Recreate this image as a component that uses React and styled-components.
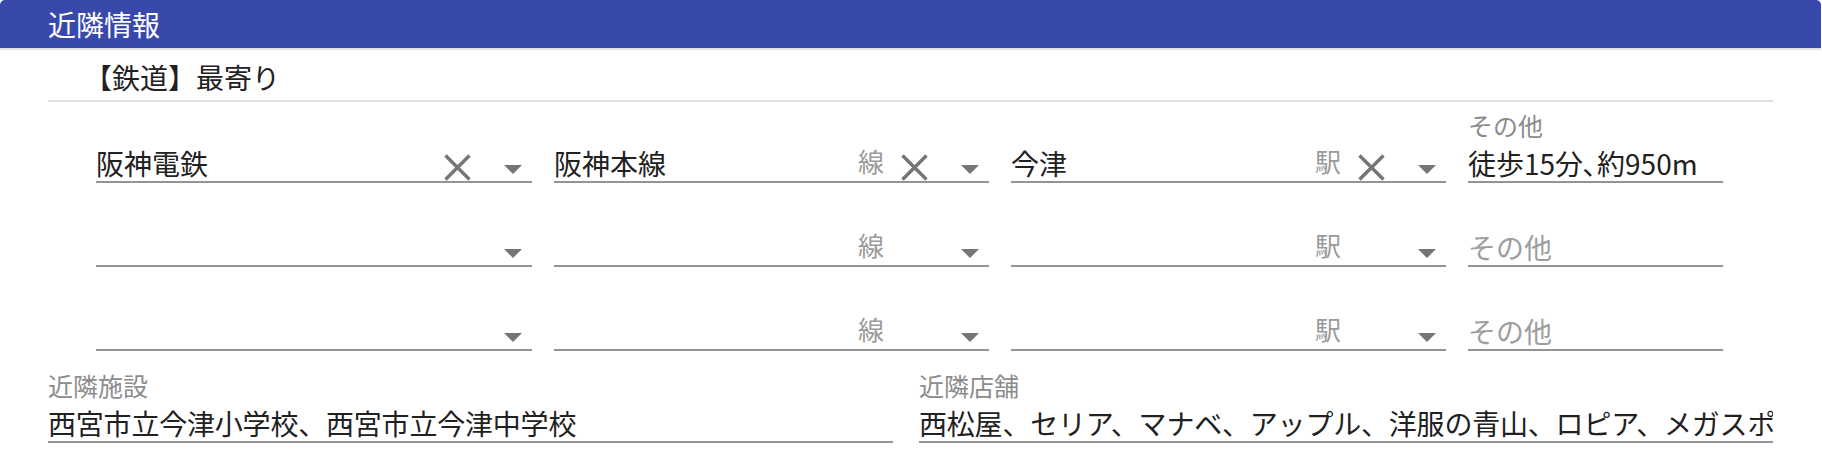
import React from 'react';
import styled, { createGlobalStyle } from 'styled-components';

const Global = createGlobalStyle`
  html, body { margin: 0; padding: 0; background: #fff; }
  body { font-family: "Noto Sans CJK JP", "Noto Sans", sans-serif; color: #212121; }
`;

const Page = styled.div`
  width: 1822px;
`;

const Header = styled.div`
  height: 48px;
  margin-right: 1px;
  background: #3949ab;
  color: #fff;
  border-radius: 5px 5px 0 0;
  padding-left: 48px;
  font-size: 28px;
  line-height: 48px;
  box-shadow: 0 2px 0 #e3e3e3;
`;

const Body = styled.div`
  padding: 0 49px 0 48px;
`;

const SubHeading = styled.div`
  height: 46px;
  padding-top: 6px;
  padding-left: 36px;
  display: flex;
  align-items: center;
  font-size: 28px;
  color: #212121;
  border-bottom: 2px solid #e0e0e0;
`;

const Rows = styled.div`
  display: grid;
  grid-template-columns: 436px 435px 435px 255px;
  column-gap: 22px;
  row-gap: 12px;
  padding: 9px 0 0 48px;
`;

const Field = styled.div`
  display: flex;
  flex-direction: column;
  min-width: 0;
`;

const Label = styled.div`
  height: 30px;
  font-size: 25px;
  line-height: 28px;
  color: #8c8c8c;
  white-space: nowrap;
`;

const InputRow = styled.div`
  height: 38px;
  padding-bottom: 2px;
  display: flex;
  align-items: flex-end;
  border-bottom: 2px solid #949494;
`;

const Input = styled.input`
  flex: 1;
  min-width: 0;
  height: 32px;
  padding: 0;
  border: none;
  outline: none;
  background: transparent;
  font-family: inherit;
  font-size: 28px;
  line-height: 32px;
  letter-spacing: ${(p) => (p.$tight ? '-0.2px' : 'normal')};
  color: #212121;
  &::placeholder {
    color: #9e9e9e;
    opacity: 1;
  }
`;

const Suffix = styled.span`
  font-size: 26px;
  line-height: 32px;
  color: #9a9a9a;
  margin-right: 17px;
  align-self: flex-end;
  padding-bottom: 2px;
`;

const ClearSlot = styled.span`
  width: 27px;
  height: 27px;
  margin-right: 33px;
  margin-bottom: -2px;
  display: flex;
  visibility: ${(p) => (p.$shown ? 'visible' : 'hidden')};
`;

const ArrowSlot = styled.span`
  width: 18px;
  height: 9px;
  margin-right: 10px;
  margin-bottom: 5px;
  display: flex;
`;

const Facilities = styled.div`
  display: grid;
  grid-template-columns: 845px 1fr;
  column-gap: 26px;
  margin-top: 20px;
`;

const ClearIcon = () => (
  <svg width="27" height="27" viewBox="0 0 27 27">
    <path d="M1.5 1.5 L25.5 25.5 M25.5 1.5 L1.5 25.5" stroke="#757575" strokeWidth="3.4" fill="none" />
  </svg>
);

const ArrowIcon = () => (
  <svg width="18" height="9" viewBox="0 0 18 9">
    <polygon points="0,0 18,0 9,9" fill="#757575" />
  </svg>
);

const SelectField = ({ value, suffix }) => (
  <Field>
    <Label />
    <InputRow>
      <Input value={value || ''} readOnly />
      {suffix && <Suffix>{suffix}</Suffix>}
      <ClearSlot $shown={!!value}>
        <ClearIcon />
      </ClearSlot>
      <ArrowSlot>
        <ArrowIcon />
      </ArrowSlot>
    </InputRow>
  </Field>
);

const TextField = ({ label, value, placeholder }) => (
  <Field>
    <Label>{value ? label : ''}</Label>
    <InputRow>
      <Input value={value || ''} placeholder={value ? '' : placeholder} readOnly />
    </InputRow>
  </Field>
);

const rows = [
  { company: '阪神電鉄', line: '阪神本線', station: '今津', other: '徒歩15分､約950m' },
  { company: '', line: '', station: '', other: '' },
  { company: '', line: '', station: '', other: '' },
];

export default function App() {
  return (
    <Page>
      <Global />
      <Header>近隣情報</Header>
      <Body>
        <SubHeading>【鉄道】最寄り</SubHeading>
        <Rows>
          {rows.map((r, i) => (
            <React.Fragment key={i}>
              <SelectField value={r.company} />
              <SelectField value={r.line} suffix="線" />
              <SelectField value={r.station} suffix="駅" />
              <TextField label="その他" value={r.other} placeholder="その他" />
            </React.Fragment>
          ))}
        </Rows>
        <Facilities>
          <Field>
            <Label>近隣施設</Label>
            <InputRow>
              <Input $tight value="西宮市立今津小学校、西宮市立今津中学校" readOnly />
            </InputRow>
          </Field>
          <Field>
            <Label>近隣店舗</Label>
            <InputRow>
              <Input $tight value="西松屋、セリア、マナベ、アップル、洋服の青山、ロピア、メガスポーツ" readOnly />
            </InputRow>
          </Field>
        </Facilities>
      </Body>
    </Page>
  );
}
